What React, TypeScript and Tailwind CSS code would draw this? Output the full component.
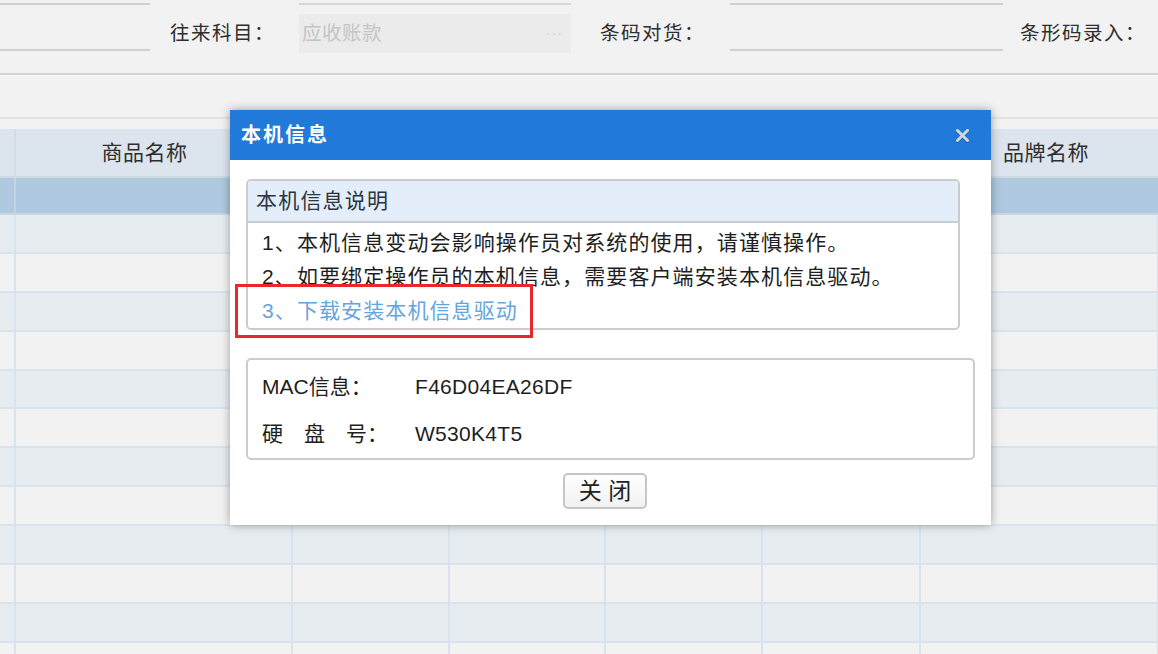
import React from "react";

const colWidths = [16, 277, 157, 156, 157, 158, 238];

function Row({ bg, h }: { bg: string; h: string }) {
  return (
    <div className={`flex ${h} ${bg} border-b-2 border-[#d8e3ed]`}>
      {colWidths.map((w, i) => (
        <div
          key={i}
          className="h-full border-r-2 border-[#d8e3ed] shrink-0"
          style={{ width: w }}
        />
      ))}
    </div>
  );
}

export default function App() {
  const rows = Array.from({ length: 12 });
  return (
    <div className="relative w-[1158px] h-[654px] overflow-hidden bg-[#f2f2f2] text-[#1e1e1e] font-['Liberation_Sans','Noto_Sans_CJK_SC',sans-serif]">
      {/* toolbar */}
      <div className="flex items-start h-[73px]">
        <div className="mt-[3px] h-[48px] w-[150px] border-y-2 border-[#d0d0d0] shrink-0" />
        <div className="ml-[20px] mt-[21px] w-[129px] text-[19.5px] leading-[24px] tracking-[1.5px] text-[#2e2e2e] shrink-0">往来科目：</div>
        <div className="flex flex-col w-[272px] shrink-0">
          <div className="mt-[3px] h-[2px] bg-[#d6d6d6]" />
          <div className="mt-[9px] h-[39px] bg-[#ebebeb] flex items-center justify-between pl-[3px] pr-[8px]">
            <span className="text-[19.5px] tracking-[0.5px] text-[#c4c4c4]">应收账款</span>
            <span className="text-[14px] tracking-[1px] text-[#cdd3da]">···</span>
          </div>
        </div>
        <div className="ml-[29px] mt-[21px] w-[130px] text-[19.5px] leading-[24px] tracking-[1.5px] text-[#2e2e2e] shrink-0">条码对货：</div>
        <div className="mt-[3px] h-[48px] w-[273px] border-y-2 border-[#d0d0d0] shrink-0" />
        <div className="ml-[17px] mt-[21px] text-[19.5px] leading-[24px] tracking-[1.5px] text-[#2e2e2e] whitespace-nowrap">条形码录入：</div>
      </div>
      <div className="h-[2px] bg-[#d3d3d3]" />
      <div className="h-[1px] bg-[#fafafa]" />
      <div className="h-[41px]" />
      <div className="h-[2px] bg-[#e4e4e4]" />
      <div className="h-[10px]" />

      {/* grid header */}
      <div className="flex h-[49px] bg-[#dce5ed] border-b-2 border-[#cdd8e2]">
        <div className="w-[16px] h-full border-r-2 border-[#cfdbe6] shrink-0" />
        <div className="w-[277px] h-full flex items-center justify-center pr-[20px] text-[21px] tracking-[0.5px] text-[#2e2e2e] shrink-0">商品名称</div>
        <div className="w-[628px] h-full shrink-0" />
        <div className="flex-1 h-full flex items-center pl-[82px] text-[21px] tracking-[0.5px] text-[#2e2e2e]">品牌名称</div>
      </div>
      <div className="flex h-[37px] bg-[#aec9e0] border-b-2 border-[#c5d6e5]">
        <div className="w-[16px] h-full border-r-2 border-[#c2d4e3] shrink-0" />
      </div>
      {rows.map((_, i) => (
        <Row
          key={i}
          bg={i % 2 === 0 ? "bg-[#e7ecf1]" : "bg-[#f2f2f2]"}
          h="h-[38.9px]"
        />
      ))}

      {/* dialog */}
      <div className="absolute left-[230px] top-[110px] w-[761px] h-[415px] bg-white shadow-[0_0_9px_rgba(0,0,0,0.35)]">
        <div className="h-[50px] bg-[#2179da] flex items-center justify-between pl-[11px] pr-[22px]">
          <span className="text-white font-bold text-[20px] tracking-[2px]">本机信息</span>
          <svg width="13" height="13" viewBox="0 0 13 13" className="drop-shadow-[0_1px_0_rgba(0,0,0,0.25)]">
            <path d="M1.5 1.5 L11.5 11.5 M11.5 1.5 L1.5 11.5" stroke="#cfd7e1" strokeWidth="3" strokeLinecap="round" />
          </svg>
        </div>
        <div className="pl-[16px] pt-[19px]">
          <div className="w-[714px] h-[151px] rounded-[5px] border-2 border-[#cccccc] overflow-hidden">
            <div className="h-[42px] bg-[#e4eefa] border-b-2 border-[#c8ced6] flex items-center pl-[8px] text-[21px] text-[#2a3440] tracking-[1.2px]">本机信息说明</div>
            <div className="pl-[14px] pt-[3px] text-[21px] leading-[34px] tracking-[1.1px]">
              <div>1、本机信息变动会影响操作员对系统的使用，请谨慎操作。</div>
              <div>2、如要绑定操作员的本机信息，需要客户端安装本机信息驱动。</div>
              <div className="text-[#64a5dd]">3、下载安装本机信息驱动</div>
            </div>
          </div>
          <div className="mt-[28px] w-[729px] h-[102px] rounded-[5px] border-2 border-[#cccccc] pl-[14px] pt-[3px] text-[21px] leading-[47px]">
            <div className="flex">
              <span className="w-[153px] shrink-0">MAC信息：</span>
              <span className="tracking-[0.3px]">F46D04EA26DF</span>
            </div>
            <div className="flex">
              <span className="w-[153px] shrink-0">硬　盘　号：</span>
              <span className="tracking-[0.3px]">W530K4T5</span>
            </div>
          </div>
          <div className="mt-[13px] ml-[317px] w-[84px] h-[36px] rounded-[5px] border-2 border-[#c6c6c6] bg-gradient-to-b from-white to-[#f1f1f1] flex items-center justify-center text-[23px] text-[#222]">
            关 闭
          </div>
        </div>
        {/* red highlight */}
        <div className="absolute left-[5px] top-[174px] w-[298px] h-[54px] border-[3px] border-[#e8282b]" />
      </div>
    </div>
  );
}
